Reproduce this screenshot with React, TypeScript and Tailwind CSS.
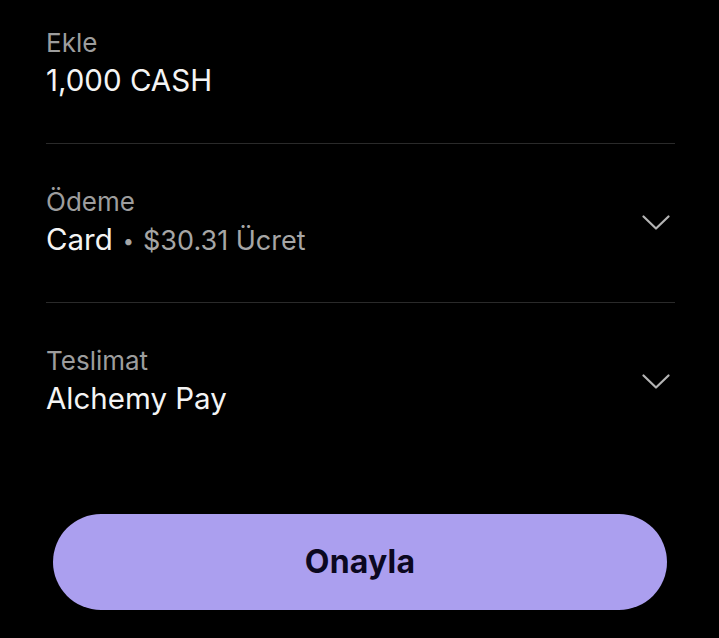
import React from "react";

const Chevron = () => (
  <svg width="28" height="16" viewBox="0 0 28 16" fill="none" className="shrink-0">
    <path d="M1.5 1.5 L14 13.5 L26.5 1.5" stroke="#b4b4b4" strokeWidth="2.2" strokeLinecap="round" strokeLinejoin="round" />
  </svg>
);

function Row({ label, children, chevron, first, last }: { label: string; children: React.ReactNode; chevron?: boolean; first?: boolean; last?: boolean }) {
  return (
    <div className={`${first ? "pt-[28px]" : "pt-[43px]"} ${last ? "" : "pb-[45px] border-b border-[#2a2a2a]"} ml-[46px] mr-[44px] flex items-center`}>
      <div className="flex-1 flex flex-col gap-[4px]">
        <div className="text-[26px] h-[30px] leading-[30px] text-[#9d9d9d]">{label}</div>
        <div className="h-[36px] flex items-baseline text-[29.5px] leading-[36px] text-[#f4f4f4] overflow-visible">{children}</div>
      </div>
      {chevron && <div className="mr-[5px] mt-[2px]"><Chevron /></div>}
    </div>
  );
}

export default function App() {
  return (
    <div className="w-[719px] h-[638px] bg-black overflow-hidden" style={{ fontFamily: "Inter, 'Noto Sans', sans-serif" }}>
      <Row label="Ekle" first>1,000 CASH</Row>
      <Row label="Ödeme" chevron>
        <span>Card</span>
        <span className="text-[#a6a6a6] text-[20px] leading-[36px] ml-[10px] mr-[9px] relative -top-[2px]">•</span>
        <span className="text-[#a6a6a6] text-[27px] leading-[36px]">$30.31 Ücret</span>
      </Row>
      <Row label="Teslimat" chevron last>Alchemy Pay</Row>
      <div className="mt-[98px] ml-[53px] mr-[52px] h-[96px] rounded-full bg-[#ab9fef] flex items-center justify-center">
        <span className="text-[32px] font-bold text-[#0b0820] tracking-[0.2px]">Onayla</span>
      </div>
    </div>
  );
}
